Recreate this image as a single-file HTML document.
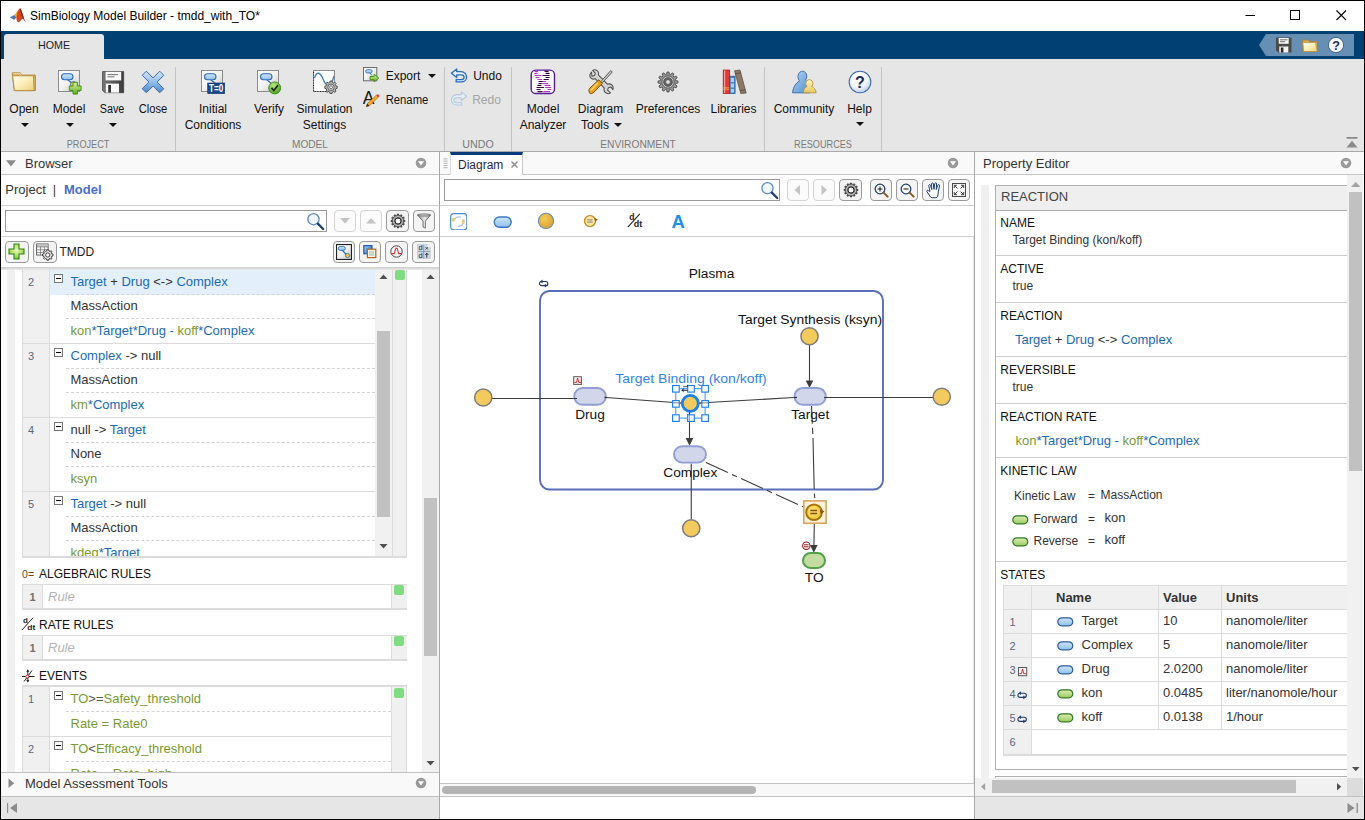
<!DOCTYPE html>
<html>
<head>
<meta charset="utf-8">
<title>SimBiology Model Builder - tmdd_with_TO*</title>
<style>
*{box-sizing:border-box;margin:0;padding:0}
html,body{width:1365px;height:820px;overflow:hidden;background:#fff}
body{font-family:"Liberation Sans",sans-serif;font-size:13px;color:#333;position:relative}
.abs,.abs>*{position:absolute}
#win{position:absolute;left:0;top:0;width:1365px;height:820px;border:1px solid #000;overflow:hidden;background:#fff}
#win>div,#win>svg{position:absolute}
/* everything inside #win is positioned relative to window outer origin (0,0) by shifting -1 */
#root{left:-1px;top:-1px;width:1365px;height:820px}
#root div,#root span.a,#root svg{position:absolute}
.t{white-space:nowrap;line-height:1}
/* title */
#title{left:30px;top:10px;font-size:12px;color:#000;letter-spacing:0}
/* blue bar */
#bluebar{left:1px;top:31px;width:1363px;height:28px;background:#004073}
#hometab{left:4px;top:34px;width:100px;height:25px;background:#e6e6e6;border-radius:3px 3px 0 0}
#hometab .t{left:0;width:100px;top:5.500px;text-align:center;font-size:11px;color:#222;transform:scaleX(.97)}
/* toolstrip */
#strip{left:1px;top:59px;width:1363px;height:92px;background:#e6e6e6}
#stripline{left:1px;top:151px;width:1363px;height:1px;background:#a9a9a9}
.sep{width:1px;top:67px;height:84px;background:#c4c4c4}
.lbl{font-size:12px;color:#111;text-align:center;white-space:nowrap;line-height:1;transform:translateX(-50%) scaleX(var(--k,1))}
.grp{font-size:11px;color:#7a7a7a;text-align:center;white-space:nowrap;line-height:1;transform:translateX(-50%) scaleX(var(--k,1));top:138.500px}
.dd{width:0;height:0;border-left:4px solid transparent;border-right:4px solid transparent;border-top:4px solid #111}
/* panels */
.phead{background:#f9f9f9;border-bottom:1px solid #c8c8c8;height:23px;top:152px}
.phead .t{font-size:13px;color:#333;top:5px}
.vdiv{width:1px;background:#a9a9a9;top:152px;height:667px;z-index:5}
.btn{border:1px solid #9a9a9a;border-radius:4px;background:#f4f4f4}
.btn.dis{border-color:#d4d4d4;background:#fbfbfb}
.inp{border:1px solid #9a9a9a;background:#fff}
.blue{color:#1a6bb5 !important}.green{color:#7a9a2f !important}

.rt{left:47.500px;font-size:13px;color:#333}
.rnum{left:5px;font-size:11px;color:#5c6680;margin-top:-.7px}
.ebox{left:31px;width:9px;height:9px;border:1px solid #777;background:#fff}
.ebox:after{content:"";position:absolute;left:1px;top:3px;width:5px;height:1px;background:#000}
.dl{left:43px;width:309px;height:0;border-top:1px dashed #d4d4d4}
.hl{left:0;width:352px;height:1px;background:#dcdcdc}
.ruletab{left:21px;width:385px;height:26px;margin-top:-.3px;border:1px solid #dcdcdc;border-top-width:1.500px;border-bottom-width:2px;background:#fff}
.ruletab .rn{left:0;top:0;width:20px;height:23px;background:#f0f0f0;border-right:1px solid #dcdcdc;font-size:11px;font-weight:bold;color:#707070;text-align:center;line-height:24.500px}
.ruletab .rp{left:25px;top:4.800px;font-size:13px;font-style:italic;color:#b4b4b4}
.ruletab .st{left:367.500px;top:0;width:16px;height:23px;background:#f0f0f0;border-left:1px solid #dcdcdc}
.ruletab .sq{left:370.500px;top:0;width:10px;height:10px;background:#80dc80;border-radius:2px}
#etab .hl{width:368px}
#etab .dl{width:325px}

.ph{left:4.300px;font-size:12px;color:#111;white-space:nowrap;line-height:1}
.pv{left:16.500px;font-size:12px;color:#333;white-space:nowrap;line-height:1}
.pl{left:0;width:360px;height:1px;background:#cfcfcf}
.sv{top:0;width:1px;background:#dcdcdc}
.sh{left:0;width:360px;height:1px;background:#dcdcdc}
.sb{font-size:13px;font-weight:bold;color:#333;margin-top:-1px}
.sn{left:5.500px;font-size:11px;color:#5c6680;margin-top:-1px}
.sc{font-size:13px;color:#333;margin-top:-1px}
</style>
</head>
<body>
<div id="win"><div id="root">

<!-- TITLE BAR -->
<div id="title" class="t">SimBiology Model Builder - tmdd_with_TO*</div>
<div id="bluebar"></div>
<div id="hometab"><div class="t">HOME</div></div>
<div id="strip"></div>
<div id="stripline"></div>

<!-- window controls -->
<svg style="left:1240px;top:5px" width="120" height="22" viewBox="0 0 120 22">
 <path d="M5.5 10.5H15" stroke="#000" stroke-width="1" fill="none"/>
 <rect x="50.5" y="5.5" width="9" height="9" stroke="#000" stroke-width="1" fill="none"/>
 <path d="M96.5 5.5l9.5 9.5M106 5.5l-9.5 9.5" stroke="#000" stroke-width="1.1" fill="none"/>
</svg>
<!-- matlab logo -->
<svg style="left:8.500px;top:6.500px" width="18" height="17.500" viewBox="0 0 20 18" preserveAspectRatio="none">
 <path d="M1 10.5l5-2.2 2.2 2.4-2.6 2.6z" fill="#4a78b8"/>
 <path d="M6 8.3c2-1 3.4-4.6 5.6-6.6 .7-.5 1.3-.2 1.7.6L16.8 12c-1.2-.6-2.6.4-3.6 1.6-1 1.2-1.8 2.2-2.6 2.2-.9 0-2.6-2-2.4-5.100z" fill="#d8461c"/>
 <path d="M11.6 1.700c.7-.5 1.300-.2 1.700.6L16.800 12l1.800 3.800c-1.500-1.600-3-3.200-4-5.400-.9-2.200-1.600-6.400-3-8.700z" fill="#8c1d10"/>
 <path d="M6 8.300c1.400-.7 2.600-2.800 3.800-4.600-.6 2.400-1.200 5-1.600 7z" fill="#f3a83a"/>
</svg>
<!-- quick access -->
<svg style="left:1258px;top:34px" width="98" height="22" viewBox="0 0 98 22">
 <path d="M1 11L8 0H96V22H8z" fill="#668fb3"/>
 <!-- save -->
 <g transform="translate(18,3.500)">
  <path d="M0 0H15.500V15H2.500L0 13z" fill="#4a4a4a"/>
  <rect x="2.700" y=".5" width="10" height="5.800" fill="#f4f4f4"/>
  <path d="M4 2.300h7.500M4 4.200h5" stroke="#666" stroke-width=".9"/>
  <rect x="3.300" y="9" width="9" height="6" fill="#f4f4f4"/>
  <rect x="4.800" y="10" width="2.600" height="5" fill="#2a2a2a"/>
 </g>
 <!-- folder -->
 <g transform="translate(44,5.500)">
  <path d="M.5.500h5.700l1.500 1.600H15.500V12H1z" fill="#d8b05c" stroke="#a87c2c" stroke-width=".8" stroke-linejoin="round"/>
  <path d="M.8 3h12.800l1.600 9H1.800z" fill="url(#gFold)" stroke="#b48a3c" stroke-width=".7" stroke-linejoin="round"/>
 </g>
 <!-- help -->
 <circle cx="78" cy="11" r="7.600" fill="#f4f6fa" stroke="#30507e" stroke-width=".8"/>
 <text x="78" y="15.500" font-family="Liberation Sans, sans-serif" font-size="12.500" font-weight="bold" text-anchor="middle" fill="#1c2c5c">?</text>
</svg>
<!-- collapse toolstrip -->
<svg style="left:1346px;top:137px" width="12" height="12" viewBox="0 0 12 12"><path d="M.5 0h11v1.800H.5z M6 3.800L11.500 10.500H.5z" fill="#8a8a8a"/></svg>

<!-- separators -->
<div class="sep" style="left:175px"></div>
<div class="sep" style="left:444px"></div>
<div class="sep" style="left:511px"></div>
<div class="sep" style="left:764px"></div>
<div class="sep" style="left:881px"></div>

<!-- group labels -->
<div class="grp" style="left:87.500px;--k:.83">PROJECT</div>
<div class="grp" style="left:310px;--k:.92">MODEL</div>
<div class="grp" style="left:478.250px;--k:.97">UNDO</div>
<div class="grp" style="left:638px;--k:.93">ENVIRONMENT</div>
<div class="grp" style="left:823px;--k:.83">RESOURCES</div>

<!-- big button labels -->
<div class="lbl" style="left:24px;top:103px">Open</div><div class="dd" style="left:21px;top:123px"></div>
<div class="lbl" style="left:69px;top:103px">Model</div><div class="dd" style="left:66px;top:123px"></div>
<div class="lbl" style="left:112.200px;top:103px;--k:.9">Save</div><div class="dd" style="left:109px;top:123px"></div>
<div class="lbl" style="left:152.500px;top:103px;--k:.93">Close</div>
<div class="lbl" style="left:213px;top:103px">Initial</div>
<div class="lbl" style="left:213px;top:119px">Conditions</div>
<div class="lbl" style="left:269px;top:103px">Verify</div>
<div class="lbl" style="left:324.500px;top:103px">Simulation</div>
<div class="lbl" style="left:324.500px;top:119px">Settings</div>
<div class="lbl" style="left:403px;top:70px">Export</div><div class="dd" style="left:428px;top:74px"></div>
<div class="lbl" style="left:406.500px;top:94px;--k:.94">Rename</div>
<div class="lbl" style="left:487.500px;top:70px">Undo</div>
<div class="lbl" style="left:486.500px;top:94px;color:#a4a4a4">Redo</div>
<div class="lbl" style="left:543px;top:103px">Model</div>
<div class="lbl" style="left:543px;top:119px">Analyzer</div>
<div class="lbl" style="left:600.500px;top:103px">Diagram</div>
<div class="lbl" style="left:595px;top:119px">Tools</div><div class="dd" style="left:614px;top:123px"></div>
<div class="lbl" style="left:668px;top:103px">Preferences</div>
<div class="lbl" style="left:733.500px;top:103px">Libraries</div>
<div class="lbl" style="left:804px;top:103px">Community</div>
<div class="lbl" style="left:859.500px;top:103px">Help</div><div class="dd" style="left:856px;top:122px"></div>

<svg width="0" height="0" style="left:0;top:0">
 <defs>
  <linearGradient id="gFold" x1="0" y1="0" x2="1" y2="1"><stop offset="0" stop-color="#fffdf0"/><stop offset=".5" stop-color="#fbeeb8"/><stop offset="1" stop-color="#eccf7a"/></linearGradient>
  <linearGradient id="gSq" x1="0" y1="0" x2="1" y2="1"><stop offset="0" stop-color="#ffffff"/><stop offset=".5" stop-color="#f2f2f2"/><stop offset="1" stop-color="#c4c4c4"/></linearGradient>
  <linearGradient id="gPill" x1="0" y1="0" x2="0" y2="1"><stop offset="0" stop-color="#cfe6fb"/><stop offset="1" stop-color="#8fc0ee"/></linearGradient>
  <linearGradient id="gGrn" x1="0" y1="0" x2="0" y2="1"><stop offset="0" stop-color="#d6f29a"/><stop offset="1" stop-color="#62b022"/></linearGradient>
  <linearGradient id="gX" x1="0" y1="0" x2="0" y2="1"><stop offset="0" stop-color="#d4e6f8"/><stop offset=".5" stop-color="#92bfe9"/><stop offset="1" stop-color="#4f86c6"/></linearGradient>
  <linearGradient id="gSave" x1="0" y1="0" x2="1" y2="0"><stop offset="0" stop-color="#777"/><stop offset=".5" stop-color="#5a5a5a"/><stop offset="1" stop-color="#3a3a3a"/></linearGradient>
  <radialGradient id="gHelp" cx=".4" cy=".3" r=".8"><stop offset="0" stop-color="#ffffff"/><stop offset=".6" stop-color="#eef2f8"/><stop offset="1" stop-color="#a9c0de"/></radialGradient>
  <linearGradient id="gBlueP" x1="0" y1="0" x2="1" y2="1"><stop offset="0" stop-color="#b8d8f4"/><stop offset="1" stop-color="#4f8ccc"/></linearGradient>
  <linearGradient id="gYelP" x1="0" y1="0" x2="0" y2="1"><stop offset="0" stop-color="#fff4c0"/><stop offset="1" stop-color="#e8c860"/></linearGradient>
  <radialGradient id="gChk" cx=".4" cy=".3" r=".8"><stop offset="0" stop-color="#b8e878"/><stop offset="1" stop-color="#3f9a18"/></radialGradient>
  <linearGradient id="gGear" x1="0" y1="0" x2="0" y2="1"><stop offset="0" stop-color="#9a9a9a"/><stop offset="1" stop-color="#5e5e5e"/></linearGradient>
  <g id="sqModel">
   <rect x=".5" y=".5" width="21" height="21" fill="url(#gSq)" stroke="#8c8c8c"/>
   <path d="M9.500 9.500L15.500 14.500" stroke="#3b6fb4" stroke-width="1.200"/>
   <rect x="3.500" y="3.800" width="11.500" height="6" rx="3" fill="url(#gPill)" stroke="#2f6cb8" stroke-width="1.100"/>
  </g>
  
  <g id="magn"><circle cx="7.500" cy="7.200" r="5.600" fill="#eef5fc" stroke="#5b89c4" stroke-width="1.300"/><path d="M4.500 5.500a3.600 3.600 0 0 1 3-2" stroke="#fff" stroke-width="1.200" fill="none"/><path d="M11.800 11.600l5.400 5.400" stroke="#1d3f72" stroke-width="2.300" stroke-linecap="round"/></g>
  
  
  <linearGradient id="gGP" x1="0" y1="0" x2="0" y2="1"><stop offset="0" stop-color="#dcefb4"/><stop offset="1" stop-color="#9cc860"/></linearGradient>
  <g id="gpill"><rect x=".8" y=".8" width="15" height="8" rx="4" fill="url(#gGP)" stroke="#2f7a24" stroke-width="1.200"/></g>
  <g id="bpill"><rect x=".8" y=".8" width="15" height="8" rx="4" fill="url(#gPill)" stroke="#2c5f9e" stroke-width="1.200"/></g>
  <g id="repic"><rect x="1" y="1.700" width="8.300" height="4.200" rx="2" fill="none" stroke="#1f3a6e" stroke-width="1.150"/><path d="M1.600 1.700L4 -.2v3.800z M8.700 5.900L6.300 4v3.800z" fill="#1f3a6e"/></g>
  <g id="gear12"><path d="M-1.07 -10.14L1.07 -10.14L1.33 -7.89L2.79 -7.50L4.15 -9.32L6.00 -8.25L5.10 -6.16L6.16 -5.10L8.25 -6.00L9.32 -4.15L7.50 -2.79L7.89 -1.33L10.14 -1.07L10.14 1.07L7.89 1.33L7.50 2.79L9.32 4.15L8.25 6.00L6.16 5.10L5.10 6.16L6.00 8.25L4.15 9.32L2.79 7.50L1.33 7.89L1.07 10.14L-1.07 10.14L-1.33 7.89L-2.79 7.50L-4.15 9.32L-6.00 8.25L-5.10 6.16L-6.16 5.10L-8.25 6.00L-9.32 4.15L-7.50 2.79L-7.89 1.33L-10.14 1.07L-10.14 -1.07L-7.89 -1.33L-7.50 -2.79L-9.32 -4.15L-8.25 -6.00L-6.16 -5.10L-5.10 -6.16L-6.00 -8.25L-4.15 -9.32L-2.79 -7.50L-1.33 -7.89z" stroke-linejoin="round"/></g>
  <g id="gear10">
   <path d="M0-10.200L1.700-10 2.200-7.800 4.500-6.900 6.300-8.200 8.200-6.300 6.900-4.500 7.800-2.200 10-1.700 10 1.700 7.800 2.200 6.900 4.500 8.200 6.300 6.300 8.200 4.500 6.900 2.200 7.800 1.700 10-1.700 10-2.200 7.800-4.500 6.900-6.300 8.200-8.200 6.300-6.900 4.500-7.800 2.200-10 1.700-10-1.700-7.800-2.200-6.900-4.500-8.200-6.300-6.300-8.200-4.500-6.900-2.200-7.800-1.700-10z"/>
  </g>
 </defs>
</svg>
<!-- Open folder -->
<svg style="left:11px;top:71px" width="27" height="21" viewBox="0 0 27 21">
 <path d="M1.300 1.800h8l1.500 2.300h13.500V19.600H3.200z" fill="#dcb768" stroke="#a87c30" stroke-width=".9" stroke-linejoin="round"/>
 <path d="M1.600 4.800h20.800l.8 14.800H3.400z" fill="url(#gFold)" stroke="#b48a3c" stroke-width=".9" stroke-linejoin="round"/>
 <path d="M1.800 2.300h7.200l1.400 2.200" fill="none" stroke="#f8e8b8" stroke-width=".8"/>
</svg>
<!-- Model (new) -->
<svg style="left:57.500px;top:69.500px" width="26" height="26" viewBox="0 0 26 26">
 <use href="#sqModel"/>
 <circle cx="15.500" cy="14.500" r="3" fill="#f2c84c" stroke="#2f6cb8" stroke-width=".9"/>
 <path d="M15 12.300h4.400v3.700h3.700v4.400h-3.700v3.700H15v-3.700h-3.700V16H15z" fill="url(#gGrn)" stroke="#3c8a12" stroke-width=".9"/>
</svg>
<!-- Save -->
<svg style="left:102px;top:71px" width="23" height="23" viewBox="0 0 23 23">
 <path d="M.5.500H21.700V21.700H3L.5 19.500z" fill="url(#gSave)" stroke="#333" stroke-width=".6"/>
 <rect x="3.600" y=".8" width="15.600" height="8.600" fill="#fafafa"/>
 <path d="M5.500 3.600H16M5.500 5.800h7" stroke="#6e6e6e" stroke-width="1"/>
 <rect x="3.800" y="12.600" width="13.200" height="9" fill="#fdfdfd"/>
 <rect x="6.200" y="14" width="2.800" height="7.600" fill="#333"/>
</svg>
<!-- Close X -->
<svg style="left:141px;top:70px" width="24" height="24" viewBox="0 0 24 24">
 <path d="M5.300 1.200L12 7.900 18.700 1.200 22.800 5.300 16.100 12 22.800 18.700 18.700 22.800 12 16.100 5.300 22.800 1.200 18.700 7.900 12 1.200 5.300z" fill="url(#gX)" stroke="#3a6cae" stroke-width="1" stroke-linejoin="round"/>
</svg>
<!-- Initial conditions -->
<svg style="left:200.500px;top:69.500px" width="26" height="26" viewBox="0 0 26 26">
 <use href="#sqModel"/>
 <rect x="6.700" y="13" width="17" height="10.600" fill="#15478c" stroke="#0d3468" stroke-width=".6"/>
 <text x="15.200" y="22" font-family="Liberation Sans,sans-serif" font-weight="bold" font-size="10.500" text-anchor="middle" fill="#fff" textLength="14.200" lengthAdjust="spacingAndGlyphs">T=0</text>
</svg>
<!-- Verify -->
<svg style="left:256.500px;top:69.500px" width="26" height="26" viewBox="0 0 26 26">
 <use href="#sqModel"/>
 <circle cx="17.700" cy="17.900" r="6" fill="url(#gChk)" stroke="#2f8412" stroke-width=".8"/>
 <path d="M14.500 17.900l2.300 2.600 4.200-5.200" fill="none" stroke="#222" stroke-width="1.700"/>
</svg>
<!-- Simulation settings -->
<svg style="left:312.500px;top:69.500px" width="27" height="26" viewBox="0 0 27 26">
 <rect x=".5" y=".5" width="21" height="21" fill="#fff" stroke="#8c8c8c"/>
 <path d="M.5 2v19.500H20" fill="none" stroke="#222" stroke-width="1.200" stroke-dasharray="1 1.600"/>
 <path d="M1.500 8C3.500 1.500 7 1.500 10 9S17 20 21 6" fill="none" stroke="#3f7cc4" stroke-width="1.300"/>
 <g transform="translate(18,17.300) scale(.62)"><use href="#gear10" fill="#b4b4b4" stroke="#3c3c3c" stroke-width="1.300"/><circle r="5.200" fill="#e0e0e0" stroke="#3c3c3c" stroke-width="1.200"/><circle r="2.400" fill="#fafafa" stroke="#444" stroke-width="1.200"/></g>
</svg>
<!-- Export -->
<svg style="left:362.500px;top:66.500px" width="18" height="18" viewBox="0 0 18 18">
 <rect x=".5" y=".5" width="13.300" height="13.300" fill="url(#gSq)" stroke="#6c6c6c"/>
 <path d="M6 5L9 8.500" stroke="#3b6fb4" stroke-width="1"/>
 <rect x="2.700" y="2.700" width="6.400" height="3.300" rx="1.650" fill="url(#gPill)" stroke="#2f6cb8" stroke-width=".9"/>
 <path d="M7 9.400h4.200V7.300L15.800 11 11.200 14.800V12.700H7z" fill="url(#gGrn)" stroke="#3c8a12" stroke-width=".9" stroke-linejoin="round"/>
</svg>
<!-- Rename -->
<svg style="left:362.500px;top:90.500px" width="18" height="18" viewBox="0 0 18 18">
 <text x="-.3" y="13.300" font-family="Liberation Sans,sans-serif" font-size="17.500" fill="#1a1a1a">A</text>
 <path d="M3.200 15.800L4.300 12.600 13.300 4.200 15.300 6.300 6.400 14.800z" fill="#f0a830" stroke="#9a6412" stroke-width=".6"/>
 <path d="M13.300 4.200l1.300-1.200 2 2.100-1.300 1.200z" fill="#d84040"/>
 <path d="M3.200 15.800l1.100-3.200 2.100 2.200z" fill="#3a2a1a"/>
</svg>
<!-- Undo -->
<svg style="left:449.800px;top:67.500px" width="18" height="15.200" viewBox="0 0 18 16">
 <path d="M6.600 1L1 5.500 6.600 10V7.200h4.600c2 0 3.200 1 3.200 2.500s-1.300 2.600-3.200 2.600H6v2.400h5.400c3.300 0 5.600-2.100 5.600-5S14.700 3.800 11.400 3.800H6.600z" fill="#e4effa" stroke="#2f6cb8" stroke-width="1.400" stroke-linejoin="round"/>
</svg>
<!-- Redo -->
<svg style="left:449.600px;top:91.300px" width="18" height="15.200" viewBox="0 0 18 16">
 <path d="M11.400 1L17 5.500 11.400 10V7.200H6.800c-2 0-3.200 1-3.200 2.500s1.300 2.600 3.200 2.600H12v2.400H6.600C3.300 14.700 1 12.600 1 9.700S3.300 3.800 6.600 3.800h4.800z" fill="#e6eef6" stroke="#b4c8de" stroke-width="1.100" stroke-linejoin="round"/>
</svg>
<!-- Model analyzer -->
<svg style="left:529.700px;top:69px" width="26" height="26" viewBox="0 0 26 26">
 <rect x="1.200" y="1.100" width="23.300" height="23.400" rx="4.600" fill="#fcfcfc" stroke="#5a1a92" stroke-width="1.400"/>
 <g stroke-width="1.200" fill="none" stroke-linecap="round">
  <path d="M4.9 2.3H7.6M4.9 4.4H7.0M5.1 6.5H11.1M6.0 8.5H8.9M7.8 10.5H11.7M13.1 12.5H15.8M12.1 14.5H17.7M15.0 16.4H19.9M15.6 18.5H20.9M18.1 20.5H20.9M13.8 22.6H19.7" stroke="#b23cc6"/>
  <path d="M15.0 2.3H18.1M16.0 4.4H19.1M12.9 6.5H19.1M16.0 8.5H19.1M14.0 10.5H18.3M9.0 12.5H12.3M9.0 14.5H11.3M8.0 16.4H10.9M7.0 18.5H13.6M7.0 20.5H10.1M8.0 22.6H12.1" stroke="#3a0a3c"/>
 </g>
</svg>
<!-- Diagram tools -->
<svg style="left:588px;top:69px" width="26" height="26" viewBox="0 0 26 26">
 <path d="M3.200 2.200C1.200 3.800.8 6.300 2.200 8 3.500 9.500 5.500 9.800 7 9l9.500 9.800c-.6 1.500-.3 3.400 1 4.600 1.500 1.400 3.800 1.500 5.400.4l-3-2.800.8-2.600 2.700-.6 2 2.600c.6-1.800.2-3.700-1.200-4.900-1.300-1.100-3-1.300-4.500-.7L10.200 5.200c.6-1.600.2-3.400-1.200-4.500C7.700-.3 5.800-.4 4.300.5L7 3.200 6.300 5.800 3.600 6.400z" fill="#d4d4d4" stroke="#4e4e4e" stroke-width="1.100" stroke-linejoin="round" transform="translate(.5,1) scale(.96)"/>
 <path d="M12 13.500L22.800 1.500 24.300 3 13.500 14.800z" fill="#c8c8c8" stroke="#4e4e4e" stroke-width=".9"/>
 <path d="M1 22.500C.5 21 1.500 19.500 3 18l7.800-7.200 3.400 3.600L7.200 22C5.500 23.800 3.700 25 2.200 24.600 1.500 24.300 1.200 23.500 1 22.500z" fill="#e8a21a" stroke="#7c5208" stroke-width="1"/>
 <path d="M2.800 21.200l7.200-7.400" stroke="#ffdc80" stroke-width="1.300" fill="none"/>
</svg>
<!-- Preferences gear -->
<svg style="left:657px;top:71px" width="22" height="22" viewBox="-11 -11 22 22">
 <g transform="scale(.98)"><use href="#gear12" fill="#9c9c9c" stroke="#484848" stroke-width=".9"/></g>
 <circle r="6.200" fill="#c4c4c4" stroke="#4a4a4a" stroke-width=".9"/>
 <circle r="4.300" fill="#6c6c6c" stroke="#3c3c3c" stroke-width=".8"/>
 <circle r="2.300" fill="#e4e4e4" stroke="#4a4a4a" stroke-width=".7"/>
</svg>
<!-- Libraries -->
<svg style="left:722px;top:69px" width="26" height="26" viewBox="0 0 26 26">
 <rect x="1.200" y="1" width="6.500" height="23.600" fill="#e23a34" stroke="#a81814" stroke-width=".7"/>
 <path d="M2.600 1.500v22.500" stroke="#f59a94" stroke-width="1.200"/>
 <path d="M1.200 18.800h6.500M1.200 20.300h6.500" stroke="#f2c24c" stroke-width=".7"/>
 <rect x="7.700" y="7.200" width="5.400" height="17.400" fill="#4f86c8" stroke="#23508e" stroke-width=".7"/>
 <rect x="8.800" y="9" width="3.200" height="4" fill="#a8d0f4"/><rect x="8.800" y="14.500" width="3.200" height="4" fill="#a8d0f4"/><rect x="8.800" y="20" width="3.200" height="3.500" fill="#a8d0f4"/>
 <path d="M12.500 1.800L18 1 24.200 24 18.800 24.600z" fill="#8c7864" stroke="#54463a" stroke-width=".7"/>
 <path d="M13.300 4.800l5.400-.9M18 21.600l5.400-.8" stroke="#54463a" stroke-width=".8"/>
</svg>
<!-- Community -->
<svg style="left:791px;top:69px" width="27" height="26" viewBox="0 0 27 26">
 <path d="M1.500 23.800C2 18 5 14 8.500 11.800 6.500 10 6.500 6.500 8 4.200 9.800 1.500 13.500 1.600 15 4.200c1.300 2.300.9 5-.4 6.800 2.500 2 3.600 5 4 12.800z" fill="url(#gBlueP)" stroke="#3468a8" stroke-width=".9"/>
 <path d="M12.300 23.800c.2-3.400 1.400-5.200 3.800-6.400-1.600-1.500-1.700-4-.4-5.500 1.400-1.600 4-1.600 5.300 0 1.300 1.600 1.100 4-.4 5.500 2.600 1.200 4.200 3 4.500 6.400z" fill="url(#gYelP)" stroke="#b8943c" stroke-width=".9"/>
</svg>
<!-- Help -->
<svg style="left:848px;top:70px" width="24" height="24" viewBox="0 0 24 24">
 <circle cx="12" cy="12" r="10.800" fill="url(#gHelp)" stroke="#3d6cb0" stroke-width="1.100"/>
 <text x="12" y="17.800" font-family="Liberation Sans,sans-serif" font-weight="bold" font-size="16" text-anchor="middle" fill="#1a2c5e">?</text>
</svg>

<!-- ============ BROWSER PANEL ============ -->
<div class="phead" style="left:1px;width:438px"></div>
<svg style="left:6.300px;top:159.500px" width="11" height="8" viewBox="0 0 11 8"><path d="M0 .3h10L5 6.600z" fill="#8c8c8c"/></svg>
<div class="t" style="left:25px;top:157px;font-size:13px;color:#333">Browser</div>
<svg style="left:415px;top:157px" width="12" height="12" viewBox="0 0 12 12"><circle cx="6" cy="6" r="5.300" fill="#9a9a9a"/><path d="M3 4.200h6L6 8.600z" fill="#fff"/></svg>
<div class="vdiv" style="left:439px"></div>

<!-- project | model -->
<div class="t" style="left:5.300px;top:183.300px;font-size:13px;color:#333">Project</div>
<div class="t" style="left:52.800px;top:182.800px;font-size:13px;color:#444">|</div>
<div class="t" style="left:64px;top:183.300px;font-size:13px;font-weight:bold;color:#4a6fc8">Model</div>
<div style="left:1px;top:205px;width:438px;height:1px;background:#d0d0d0"></div>

<!-- search row -->
<div class="inp" style="left:5px;top:210px;width:322px;height:22px"></div>
<svg id="mag1" style="left:306px;top:212px" width="20" height="19" viewBox="0 0 20 19"><use href="#magn"/></svg>
<div class="btn dis" style="left:334px;top:210px;width:22px;height:22px"></div>
<svg style="left:340px;top:218px" width="10" height="6"><path d="M0 0h10L5 5.500z" fill="#c4c4c4"/></svg>
<div class="btn dis" style="left:360px;top:210px;width:22px;height:22px"></div>
<svg style="left:366px;top:218px" width="10" height="6"><path d="M0 5.500h10L5 0z" fill="#c4c4c4"/></svg>
<div class="btn" style="left:386px;top:210px;width:23px;height:22px"></div>
<svg style="left:389.500px;top:213px" width="16" height="16" viewBox="-8 -8 16 16"><g transform="scale(.68)"><use href="#gear12" fill="#5c5c5c" stroke="#262626" stroke-width="1"/></g><circle r="4.500" fill="none" stroke="#b4b4b4" stroke-width="1.500"/><circle r="3" fill="#fdfdfd" stroke="#262626" stroke-width="1"/></svg>
<div class="btn" style="left:413px;top:210px;width:22px;height:22px"></div>
<svg style="left:416px;top:213px" width="16" height="17" viewBox="0 0 16 17"><defs><linearGradient id="gFun" x1="0" y1="0" x2="1" y2="0"><stop offset="0" stop-color="#8c8c8c"/><stop offset=".55" stop-color="#e8e8e8"/><stop offset="1" stop-color="#9a9a9a"/></linearGradient></defs><path d="M1.500 2h13L9.400 8.200v7L7 14V8.200z" fill="url(#gFun)" stroke="#5a5a5a" stroke-width=".8" stroke-linejoin="round"/><ellipse cx="8" cy="2" rx="6.500" ry="1.100" fill="#c8c8c8" stroke="#5a5a5a" stroke-width=".7"/></svg>
<div style="left:1px;top:236px;width:438px;height:1px;background:#d0d0d0"></div>

<!-- model row -->
<div class="btn" style="left:5px;top:240.500px;width:23.500px;height:22px"></div>
<svg style="left:8px;top:243px" width="17" height="17" viewBox="0 0 17 17"><defs><radialGradient id="gPlus" cx=".5" cy=".4" r=".7"><stop offset="0" stop-color="#e8f8c0"/><stop offset=".6" stop-color="#a8dc58"/><stop offset="1" stop-color="#5cac20"/></radialGradient></defs><path d="M6 1h5v5h5v5h-5v5H6v-5H1V6h5z" fill="url(#gPlus)" stroke="#2f8412" stroke-width="1.100"/></svg>
<div class="btn" style="left:33px;top:240.500px;width:23.500px;height:22px"></div>
<svg style="left:36px;top:243px" width="18" height="18" viewBox="0 0 18 18">
 <rect x=".6" y="1" width="11.500" height="11" fill="#fff" stroke="#555" stroke-width=".9"/>
 <rect x="1" y="1.400" width="10.700" height="2.300" fill="#c4c4c4"/>
 <path d="M.6 3.900h11.500M.6 6.700h11.500M.6 9.400h11.500M4.500 3.900v8M8.300 3.900v8" stroke="#666" stroke-width=".7"/>
 <g transform="translate(11.800,12) scale(.52)"><use href="#gear10" fill="#dcdcdc" stroke="#333" stroke-width="1.800"/><circle r="4" fill="#fff" stroke="#333" stroke-width="1.600"/></g>
</svg>
<div class="t" style="left:59.500px;top:245.500px;font-size:12px;color:#222">TMDD</div>
<div class="btn" style="left:333px;top:240.500px;width:22px;height:22px"></div>
<svg style="left:336px;top:243.500px" width="16" height="16" viewBox="0 0 16 16"><rect x=".5" y=".5" width="15" height="15" fill="url(#gSq)" stroke="#222" stroke-width="1.200"/><path d="M5.500 5.500l5.800 6" stroke="#2f6cb8" stroke-width="1.100"/><rect x="2.300" y="2.500" width="7" height="3.800" rx="1.900" fill="url(#gPill)" stroke="#2f6cb8" stroke-width=".9"/><circle cx="11.500" cy="11.500" r="2.100" fill="#f2c84c" stroke="#2f6cb8" stroke-width=".8"/></svg>
<div class="btn" style="left:359px;top:240.500px;width:22px;height:22px"></div>
<svg style="left:363px;top:245px" width="14" height="14" viewBox="0 0 14 14"><defs><linearGradient id="gB2" x1="0" y1="0" x2="1" y2="1"><stop offset="0" stop-color="#9cc8f4"/><stop offset="1" stop-color="#2a6ac4"/></linearGradient></defs><rect x=".8" y=".6" width="8.200" height="8.200" fill="url(#gB2)" stroke="#1c55a8" stroke-width="1.100"/><rect x="4.400" y="4.200" width="8.400" height="8.400" fill="#fdf4dc" stroke="#a8662a" stroke-width="1.200"/><rect x="6.500" y="6.300" width="4.200" height="4.200" fill="#c8d8c8" stroke="#b8c8d8" stroke-width=".6"/></svg>
<div class="btn" style="left:384.800px;top:240.500px;width:23px;height:22px"></div>
<svg style="left:389.800px;top:245px" width="13" height="13" viewBox="0 0 13 13"><circle cx="6.500" cy="6.500" r="5.700" fill="#fafafa" stroke="#444" stroke-width="1"/><path d="M1.300 8.600h3L5.800 3.200h1.400L8.700 8.600h3" fill="none" stroke="#e03030" stroke-width="1.100"/></svg>
<div class="btn" style="left:412px;top:240.500px;width:23px;height:22px"></div>
<svg style="left:416.500px;top:244px" width="15" height="15" viewBox="0 0 15 15"><path d="M.5.500h10l2.800 2.800v11.200H.5z" fill="#d0d9e6" stroke="#b0b8c4" stroke-width=".5"/><path d="M10.500.500v2.800h2.800z" fill="#fff"/><path d="M6.700 1v13.500M1 7.500h12" stroke="#7a828c" stroke-width=".7"/><text x="1.500" y="6.300" font-family="Liberation Sans,sans-serif" font-size="7.500" fill="#222">d</text><text x="1.500" y="13.600" font-family="Liberation Sans,sans-serif" font-size="7.500" fill="#222">d</text><path d="M8.500 3l2.600 2.600M11.100 3l-2.600 2.600" stroke="#333" stroke-width=".8"/><path d="M9.800 9.200v4.600M8.200 11l1.600-1.800 1.600 1.800" stroke="#222" stroke-width=".9" fill="none"/></svg>

<!-- shadow under model row -->
<div style="left:1px;top:267px;width:438px;height:3px;background:linear-gradient(#cfcfcf,#e9e9e9)"></div>

<!-- scroll area -->
<div id="bscroll" style="left:1px;top:270px;width:438px;height:502px;overflow:hidden;background:#fff">
 <div style="left:6px;top:0;width:8px;height:502px;background:#f0f0f0"></div>
 <!-- outer scrollbar -->
 <div style="left:421px;top:0;width:17px;height:502px;background:#f1f1f1"></div>
 <svg style="left:425px;top:4px" width="10" height="6"><path d="M.5 5h8L4.500 .5z" fill="#505050"/></svg>
 <svg style="left:425px;top:490px" width="10" height="6"><path d="M.5 1h8L4.500 5.500z" fill="#505050"/></svg>
 <div style="left:423px;top:228px;width:13px;height:158px;background:#c1c1c1"></div>

 <!-- reactions table -->
 <div id="rtab" style="left:21px;top:0;width:385px;height:288px;overflow:hidden;border-left:1px solid #dcdcdc;border-right:1px solid #dcdcdc;border-bottom:2px solid #dcdcdc;background:#fff">
  <div style="left:0;top:0;width:27px;height:288px;background:#f0f0f0;border-right:1px solid #dcdcdc"></div>
  <div style="left:27px;top:0;width:325px;height:24.500px;background:#e3f0fb"></div>
  <!-- inner scrollbar -->
  <div style="left:351.500px;top:0;width:17px;height:287px;background:#f1f1f1"></div>
  <svg style="left:355.500px;top:4px" width="10" height="6"><path d="M.5 5h8L4.500 .5z" fill="#505050"/></svg>
  <svg style="left:355.500px;top:273px" width="10" height="6"><path d="M.5 1h8L4.500 5.500z" fill="#505050"/></svg>
  <div style="left:353.500px;top:61px;width:13px;height:186px;background:#c1c1c1"></div>
  <!-- status col -->
  <div style="left:368.500px;top:0;width:15.500px;height:287px;background:#f0f0f0;border-left:1px solid #dcdcdc"></div>
  <div style="left:371.500px;top:0;width:10px;height:10px;background:#80dc80;border-radius:2px"></div>
  <div class="t rnum" style="top:8px">2</div>
  <div class="ebox" style="top:4px"></div>
  <div class="t rt" style="top:5px"><span class="blue">Target</span> + <span class="blue">Drug</span> &lt;-&gt; <span class="blue">Complex</span></div>
  <div class="dl" style="top:24px"></div>
  <div class="t rt" style="top:29px">MassAction</div>
  <div class="dl" style="top:48px"></div>
  <div class="t rt" style="top:54px"><span class="green">kon</span><span class="blue">*Target*Drug - </span><span class="green">koff</span><span class="blue">*Complex</span></div>
  <div class="hl" style="top:73px"></div>
  <div class="t rnum" style="top:82px">3</div>
  <div class="ebox" style="top:78px"></div>
  <div class="t rt" style="top:79px"><span class="blue">Complex</span> -&gt; null</div>
  <div class="dl" style="top:98px"></div>
  <div class="t rt" style="top:103px">MassAction</div>
  <div class="dl" style="top:122px"></div>
  <div class="t rt" style="top:128px"><span class="green">km</span><span class="blue">*Complex</span></div>
  <div class="hl" style="top:147px"></div>
  <div class="t rnum" style="top:156px">4</div>
  <div class="ebox" style="top:152px"></div>
  <div class="t rt" style="top:153px">null -&gt; <span class="blue">Target</span></div>
  <div class="dl" style="top:172px"></div>
  <div class="t rt" style="top:177px">None</div>
  <div class="dl" style="top:196px"></div>
  <div class="t rt" style="top:202px"><span class="green">ksyn</span></div>
  <div class="hl" style="top:221px"></div>
  <div class="t rnum" style="top:230px">5</div>
  <div class="ebox" style="top:226px"></div>
  <div class="t rt" style="top:227px"><span class="blue">Target</span> -&gt; null</div>
  <div class="dl" style="top:246px"></div>
  <div class="t rt" style="top:251px">MassAction</div>
  <div class="dl" style="top:270px"></div>
  <div class="t rt" style="top:276px"><span class="green">kdeg</span><span class="blue">*Target</span></div>
 </div>

 <!-- algebraic rules -->
 <div class="t" style="left:21px;top:298.500px;font-size:10.500px;color:#6a4a1a;letter-spacing:.2px">0=</div>
 <div class="t" style="left:38px;top:298px;font-size:12px;color:#111">ALGEBRAIC RULES</div>
 <div class="ruletab" style="top:314px"><div class="rn">1</div><div class="t rp">Rule</div><div class="st"></div><div class="sq"></div></div>
 <!-- rate rules -->
 <svg style="left:19.500px;top:347px" width="15" height="14" viewBox="0 0 15 14"><g><path d="M.8 13.200L12 .8" stroke="#222" stroke-width="1"/><text x="2" y="6.200" font-family="Liberation Sans,sans-serif" font-size="8" font-weight="bold" fill="#222">d</text><text x="6.300" y="13.300" font-family="Liberation Sans,sans-serif" font-size="8" font-weight="bold" fill="#222" textLength="8" lengthAdjust="spacingAndGlyphs">dt</text></g></svg>
 <div class="t" style="left:38px;top:349px;font-size:12px;color:#111">RATE RULES</div>
 <div class="ruletab" style="top:365px"><div class="rn">1</div><div class="t rp">Rule</div><div class="st"></div><div class="sq"></div></div>
 <!-- events -->
 <svg style="left:19.500px;top:398.500px" width="15" height="14" viewBox="0 0 15 14"><path d="M1 7.500h12.500M6.800 1.500v11M3 12.500L11 1.500" stroke="#222" stroke-width="1" fill="none"/><path d="M6.800 13.500l-1.600-2.400h3.200z M6.800 .3l-1.600 2.400h3.200z" fill="#222"/><circle cx="6.300" cy="7.600" r="1.500" fill="#fff" stroke="#e02020" stroke-width="1"/></svg>
 <div class="t" style="left:38px;top:400px;font-size:12px;color:#111">EVENTS</div>
 <div id="etab" style="left:21px;top:415px;width:385px;height:100px;border:1px solid #dcdcdc;border-top:2px solid #dcdcdc;background:#fff;overflow:hidden">
  <div style="left:0;top:0;width:27px;height:100px;background:#f0f0f0;border-right:1px solid #dcdcdc"></div>
  <div style="left:367.500px;top:0;width:16px;height:100px;background:#f0f0f0;border-left:1px solid #dcdcdc"></div>
  <div style="left:370.500px;top:1px;width:10px;height:10px;background:#80dc80;border-radius:2px"></div>
  <div class="t rnum" style="top:8px">1</div>
  <div class="ebox" style="top:4px"></div>
  <div class="t rt green" style="top:5px">TO<span style="color:#555">&gt;=</span>Safety_threshold</div>
  <div class="dl" style="top:24px"></div>
  <div class="t rt green" style="top:29.500px">Rate = Rate0</div>
  <div class="hl" style="top:49px"></div>
  <div class="t rnum" style="top:58px">2</div>
  <div class="ebox" style="top:54px"></div>
  <div class="t rt green" style="top:55px">TO<span style="color:#555">&lt;</span>Efficacy_threshold</div>
  <div class="dl" style="top:74px"></div>
  <div class="t rt green" style="top:79.500px">Rate = Rate_high</div>
 </div>
</div>

<!-- Model Assessment Tools -->
<div style="left:1px;top:772px;width:438px;height:25px;background:#f9f9f9;border-top:1px solid #c0c0c0;border-bottom:1px solid #c0c0c0"></div>
<svg style="left:8px;top:778px" width="7" height="11"><path d="M.5.500v9.500L6.200 5.200z" fill="#8c8c8c"/></svg>
<div class="t" style="left:25px;top:777px;font-size:13px;color:#333">Model Assessment Tools</div>
<svg style="left:415px;top:777px" width="12" height="12" viewBox="0 0 12 12"><circle cx="6" cy="6" r="5.300" fill="#9a9a9a"/><path d="M3 4.200h6L6 8.600z" fill="#fff"/></svg>
<!-- bottom status -->
<div style="left:1px;top:797px;width:438px;height:22px;background:#e6e6e6"></div>
<svg style="left:7px;top:803px" width="11" height="10"><path d="M.5 0v10" stroke="#8c8c8c" stroke-width="1.300"/><path d="M10 0v10L3 5z" fill="#8c8c8c"/></svg>

<!-- ============ DIAGRAM PANEL ============ -->
<div class="phead" style="left:440px;width:534px"></div>
<svg style="left:442.500px;top:157.500px" width="6" height="12"><path d="M.5 .9h4M.5 3.100h4M.5 5.300h4M.5 7.500h4M.5 9.700h4" stroke="#b4b4b4" stroke-width="1"/></svg>
<div style="left:449.500px;top:152px;width:73.300px;height:23px;background:#fff;border-top:3px solid #0a3c7c;border-right:1px solid #c8c8c8;border-left:1px solid #dcdcdc"></div>
<div class="t" style="left:458px;top:158.500px;font-size:12px;color:#1f2a44">Diagram</div>
<svg style="left:510.500px;top:160.500px" width="7" height="7"><path d="M.5.500l6 6M6.500.500l-6 6" stroke="#8a8a8a" stroke-width="1.400"/></svg>
<svg style="left:947px;top:157px" width="12" height="12" viewBox="0 0 12 12"><circle cx="6" cy="6" r="5.300" fill="#9a9a9a"/><path d="M3 4.200h6L6 8.600z" fill="#fff"/></svg>
<div class="vdiv" style="left:974px"></div>

<!-- search row -->
<div class="inp" style="left:444px;top:179px;width:336px;height:22px"></div>
<svg style="left:760px;top:181px" width="20" height="19" viewBox="0 0 20 19"><use href="#magn"/></svg>
<div class="btn dis" style="left:787px;top:179px;width:22px;height:22px"></div>
<svg style="left:794px;top:185px" width="7" height="10"><path d="M6 0v10L.5 5z" fill="#c4c4c4"/></svg>
<div class="btn dis" style="left:813px;top:179px;width:22px;height:22px"></div>
<svg style="left:821px;top:185px" width="7" height="10"><path d="M.5 0v10L6 5z" fill="#c4c4c4"/></svg>
<div class="btn" style="left:839px;top:179px;width:23px;height:22px"></div>
<svg style="left:842.500px;top:182px" width="16" height="16" viewBox="-8 -8 16 16"><g transform="scale(.68)"><use href="#gear12" fill="#5c5c5c" stroke="#262626" stroke-width="1"/></g><circle r="4.500" fill="none" stroke="#b4b4b4" stroke-width="1.500"/><circle r="3" fill="#fdfdfd" stroke="#262626" stroke-width="1"/></svg>
<div class="btn" style="left:870px;top:179px;width:22px;height:22px"></div>
<svg style="left:874px;top:183px" width="15" height="15" viewBox="0 0 15 15"><circle cx="6" cy="6" r="4.800" fill="#fff" stroke="#1d3f72" stroke-width="1.300"/><path d="M3.500 6h5M6 3.500v5" stroke="#222" stroke-width="1.100"/><path d="M9.600 9.600l4 4" stroke="#8a5a1a" stroke-width="2" stroke-linecap="round"/></svg>
<div class="btn" style="left:896px;top:179px;width:22px;height:22px"></div>
<svg style="left:900px;top:183px" width="15" height="15" viewBox="0 0 15 15"><circle cx="6" cy="6" r="4.800" fill="#fff" stroke="#1d3f72" stroke-width="1.300"/><path d="M3.500 6h5" stroke="#222" stroke-width="1.100"/><path d="M9.600 9.600l4 4" stroke="#8a5a1a" stroke-width="2" stroke-linecap="round"/></svg>
<div class="btn" style="left:922px;top:179px;width:22px;height:22px"></div>
<svg style="left:924.500px;top:181.500px" width="18" height="17" viewBox="0 0 18 17"><path d="M5 9.500L3.800 3.800c-.3-1.300 1.400-1.700 1.800-.4L6.800 7.500 6.500 2c0-1.300 1.800-1.400 1.900-.1l.5 5.400L9.800 1.700c.1-1.300 1.900-1.100 1.800.2L11.200 7.600l1.600-4.400c.4-1.200 2-.6 1.700.6L13.400 9.200c-.2 1.200-.3 2.600-.5 3.800-.2 1.500-.8 2.700-2 2.700H7.200c-1 0-1.600-.6-2.200-1.500L2 9.800c-.7-1.100.7-2.100 1.500-1.100z" fill="#fff" stroke="#1d3f72" stroke-width="1" stroke-linejoin="round"/></svg>
<div class="btn" style="left:948px;top:179px;width:22px;height:22px"></div>
<svg style="left:952px;top:183px" width="14" height="14" viewBox="0 0 14 14"><rect x=".5" y=".5" width="13" height="13" fill="#fff" stroke="#4a4a4a" stroke-width="1.100"/><path d="M2.300 5V2.300H5M2.300 2.300L5.500 5.500M9 2.300h2.700V5M11.700 2.300L8.500 5.500M2.300 9v2.700H5M2.300 11.700L5.500 8.500M11.700 9v2.700H9M11.700 11.700L8.500 8.500" stroke="#333" stroke-width=".9" fill="none"/></svg>
<div style="left:440px;top:205px;width:534px;height:1px;background:#d0d0d0"></div>

<!-- palette -->
<svg style="left:449.500px;top:212.800px" width="17.500" height="17.500" viewBox="0 0 18 18"><rect x=".7" y=".7" width="16.600" height="16.600" rx="3" fill="#fff" stroke="#4a90d8" stroke-width="1.300"/><path d="M4.500 6.500C6 4 9 3.800 11 4.200M13.500 10.500c-1 3-3.500 3.400-5.500 3.200" stroke="#a8c8e8" stroke-width="1.300" fill="none"/><rect x="2.400" y="5.500" width="2.300" height="3" rx=".5" fill="#f4d060" stroke="#d8b040" stroke-width=".4"/><rect x="12.500" y="7" width="2.300" height="3.800" rx=".5" fill="#f4d060" stroke="#d8b040" stroke-width=".4"/></svg>
<svg style="left:493px;top:215.500px" width="20" height="13" viewBox="0 0 20 13"><rect x="1.200" y="1" width="17" height="10.200" rx="5.100" fill="url(#gPill)" stroke="#3a78c0" stroke-width="1.400"/></svg>
<svg style="left:537px;top:212px" width="18" height="18" viewBox="0 0 18 18"><defs><radialGradient id="gBall" cx=".4" cy=".35" r=".75"><stop offset="0" stop-color="#f4cc58"/><stop offset="1" stop-color="#d89c2c"/></radialGradient></defs><circle cx="9" cy="8.900" r="7.600" fill="url(#gBall)" stroke="#6890b8" stroke-width="1.100"/></svg>
<svg style="left:583px;top:213px" width="17" height="16" viewBox="0 0 17 16"><circle cx="7" cy="8.100" r="5.500" fill="#fce9a4" stroke="#c88a2a" stroke-width="1.400"/><path d="M4.200 6.900h5.400M4.200 9.200h5.400" stroke="#9a9080" stroke-width="1.200"/><path d="M11.300 5l3.600 1.300-2.600 2.400z" fill="#a05a14"/></svg>
<svg style="left:626.500px;top:213px" width="16" height="15" viewBox="0 0 15 14"><g><path d="M.8 13.200L12 .8" stroke="#222" stroke-width="1"/><text x="2" y="6.200" font-family="Liberation Sans,sans-serif" font-size="8" font-weight="bold" fill="#222">d</text><text x="6.300" y="13.300" font-family="Liberation Sans,sans-serif" font-size="8" font-weight="bold" fill="#222" textLength="8" lengthAdjust="spacingAndGlyphs">dt</text></g></svg>
<div class="t" style="left:671.500px;top:212.500px;font-size:18.500px;font-weight:bold;color:#1e90f0">A</div>
<div style="left:440px;top:236px;width:534px;height:1px;background:#d0d0d0"></div>

<!-- canvas -->
<svg id="canvas" style="left:440px;top:237px" width="534" height="546" viewBox="440 237 534 546" font-family="Liberation Sans,sans-serif">
 <!-- compartment -->
 <rect x="540" y="291" width="343" height="198.500" rx="9.500" fill="none" stroke="#5b6fb8" stroke-width="1.900"/>
 <text x="711.500" y="278" font-size="13.700" text-anchor="middle" fill="#111">Plasma</text>
 <g transform="translate(538.500,279.800)"><use href="#repic"/></g>
 <!-- edges -->
 <g stroke="#3c3c3c" stroke-width="1.100" fill="none">
  <path d="M492 398.500H574"/>
  <path d="M606 397.500L681 403"/>
  <path d="M699 403L794 397.500"/>
  <path d="M826 397.500H933.500"/>
  <path d="M809.500 345V382"/>
  <path d="M689.500 412V439"/>
  <path d="M691.250 463.500V519"/>
  <path d="M814.300 524L813.900 546"/>
  <path d="M706 462.600L803.500 507" stroke-dasharray="24 4.500 5.500 4.500"/>
  <path d="M811.500 406L812.300 423.700M812.500 427.700L812.800 434M813 438L814.200 489M814.400 493.500L814.700 498"/>
 </g>
 <g fill="#3c3c3c">
  <path d="M805.700 380.500h7.600L809.500 388z"/>
  <path d="M685.700 438h7.600L689.500 445.800z"/>
  <path d="M810 545h7.600L813.800 552.800z"/>
 </g>
 <!-- source/sink circles -->
 <g fill="#f3ca5e" stroke="#7c7c7c" stroke-width="1.500">
  <circle cx="483.250" cy="397.500" r="8.600"/>
  <circle cx="941.750" cy="396.750" r="8.600"/>
  <circle cx="809.500" cy="336.250" r="8.600"/>
  <circle cx="691.250" cy="528.250" r="8.600"/>
 </g>
 <!-- species -->
 <g fill="#d1d6eb" stroke="#919ed3" stroke-width="1.900">
  <rect x="574.200" y="388" width="31.600" height="16.800" rx="8.400"/>
  <rect x="794.500" y="388" width="31.300" height="16.800" rx="8.400"/>
  <rect x="674" y="446.200" width="32" height="16.400" rx="8.200"/>
 </g>
 <g stroke="#333" stroke-width="1.100" fill="none"><path d="M574 398.500H577M604.500 397.400L607 397.600M794 397.600L797 397.400M824 397.500H827"/></g>
 <g font-size="13.700" fill="#111" text-anchor="middle">
  <text x="590" y="419.200">Drug</text>
  <text x="810.200" y="419.200">Target</text>
  <text x="690.300" y="476.700">Complex</text>
  <text x="814.200" y="581.700">TO</text>
  <text x="810" y="323.700" textLength="144" lengthAdjust="spacingAndGlyphs">Target Synthesis (ksyn)</text>
  <text x="691" y="383" fill="#2f86ea" textLength="151.500" lengthAdjust="spacingAndGlyphs">Target Binding (kon/koff)</text>
 </g>
 <!-- drug dose icon -->
 <g transform="translate(573.200,376.200)"><rect x=".5" y=".5" width="7.700" height="7.700" fill="#f2f2f2" stroke="#5a5a5a" stroke-width="1"/><path d="M1.100 6.200h2.200L4.400 1.800 5.500 6.200h2.400" fill="none" stroke="#e02020" stroke-width=".9"/></g>
 <!-- selected reaction -->
 <circle cx="690.300" cy="403.300" r="8" fill="#f3ca5e" stroke="#1c7fee" stroke-width="2.800"/>
 <path d="M689.500 411.500V415M681 403.200H673M699.500 403.200H708" stroke="#3c3c3c" stroke-width="1.100" opacity=".55"/>
 <g fill="none" stroke="#1c7fee" stroke-width=".9">
  <path d="M679.800 388.700H687.200M694.800 388.700H701.300M679.800 418.100H687.200M694.800 418.100H701.300M675.800 392.300V400.100M675.800 407.700V414.300M705.100 392.300V400.100M705.100 407.700V414.300"/>
 </g>
 <g fill="#fff" fill-opacity=".55" stroke="#1c7fee" stroke-width="1.150">
  <rect x="672.600" y="385.500" width="6.600" height="6.600"/><rect x="687.700" y="385.500" width="6.600" height="6.600"/><rect x="701.800" y="385.500" width="6.600" height="6.600"/>
  <rect x="672.600" y="400.600" width="6.600" height="6.600"/><rect x="701.800" y="400.600" width="6.600" height="6.600"/>
  <rect x="672.600" y="414.800" width="6.600" height="6.600"/><rect x="687.700" y="414.800" width="6.600" height="6.600"/><rect x="701.800" y="414.800" width="6.600" height="6.600"/>
 </g>
 <path d="M683.200 386.700h4.300M687.500 386.700V384.800" stroke="#1a2a4a" stroke-width=".8" fill="none"/>
 <path d="M681.300 390.200l2.300-2v1.500h4v1h-4v1.500z" fill="#1a2a4a"/>
 <!-- rule node -->
 <rect x="803.800" y="500.900" width="22.300" height="22.300" fill="#fdf3d8" stroke="#d6ab6c" stroke-width="1.700"/>
 <defs><radialGradient id="gRule" cx=".4" cy=".4" r=".7"><stop offset="0" stop-color="#fbe47a"/><stop offset="1" stop-color="#efc42c"/></radialGradient></defs>
 <circle cx="814" cy="512.200" r="7.800" fill="url(#gRule)" stroke="#a87412" stroke-width="2"/>
 <path d="M810.300 510.600h6.800M810.300 513.600h6.800" stroke="#8a4a10" stroke-width="1.500"/>
 <path d="M819.800 509.800l4.600 1.500-3.400 3.300z" fill="#8a4a10"/>
 <!-- TO -->
 <rect x="803" y="553" width="22" height="15" rx="7.500" fill="#c4dca0" stroke="#52a04a" stroke-width="2"/>
 <g transform="translate(806.300,545.700)"><circle r="3.700" fill="#fff" stroke="#961a1a" stroke-width="1.100"/><path d="M-2.300-.9h4.600M-2.300 1.100h4.600" stroke="#961a1a" stroke-width="1"/></g>
</svg>
<!-- right strip of diagram -->
<div style="left:973px;top:237px;width:1px;height:546px;background:#e4e4e4"></div>
<!-- h scrollbar -->
<div style="left:440px;top:783px;width:534px;height:14px;background:#f8f8f8;border-top:1px solid #c4c4c4;border-bottom:1px solid #c4c4c4"></div>
<div style="left:442px;top:786px;width:314px;height:8px;border-radius:4px;background:#b4b4b4"></div>

<!-- ============ PROPERTY EDITOR ============ -->
<div class="phead" style="left:975px;width:389px"></div>
<div class="t" style="left:983px;top:157px;font-size:13px;color:#333">Property Editor</div>
<svg style="left:1340px;top:157px" width="12" height="12" viewBox="0 0 12 12"><circle cx="6" cy="6" r="5.300" fill="#9a9a9a"/><path d="M3 4.200h6L6 8.600z" fill="#fff"/></svg>

<div id="pscroll" style="left:975px;top:175px;width:372px;height:603px;overflow:hidden;background:#fff">
 <div style="left:6px;top:10px;width:8px;height:600px;background:#f0f0f0"></div>
 <div id="rbox" style="left:20px;top:10px;width:360px;height:585px;border:1px solid #b0b0b0;background:#fff">
  <div style="left:0;top:0;width:360px;height:25px;background:#efefef;border-bottom:1px solid #b0b0b0"></div>
  <div class="t" style="left:5px;top:4.200px;font-size:13px;color:#444">REACTION</div>
  <div class="ph" style="top:31px">NAME</div>
  <div class="pv" style="top:48px">Target Binding (kon/koff)</div>
  <div class="pl" style="top:69px"></div>
  <div class="ph" style="top:77px">ACTIVE</div>
  <div class="pv" style="top:94px;left:16.500px">true</div>
  <div class="pl" style="top:116px"></div>
  <div class="ph" style="top:124px">REACTION</div>
  <div class="t" style="left:19px;top:146.500px;font-size:13px"><span class="blue">Target</span> + <span class="blue">Drug</span> &lt;-&gt; <span class="blue">Complex</span></div>
  <div class="pl" style="top:170px"></div>
  <div class="ph" style="top:178px">REVERSIBLE</div>
  <div class="pv" style="top:195px;left:16.500px">true</div>
  <div class="pl" style="top:217px"></div>
  <div class="ph" style="top:225px">REACTION RATE</div>
  <div class="t" style="left:19.500px;top:248px;font-size:13px"><span class="green">kon</span><span class="blue">*Target*Drug - </span><span class="green">koff</span><span class="blue">*Complex</span></div>
  <div class="pl" style="top:271px"></div>
  <div class="ph" style="top:279px">KINETIC LAW</div>
  <div class="pv" style="top:304px;left:18px">Kinetic Law</div>
  <div class="pv" style="top:304px;left:92px">=</div>
  <div class="pv" style="top:303px;left:104.500px">MassAction</div>
  <svg style="left:16px;top:328.500px" width="17" height="10" viewBox="0 0 17 10"><use href="#gpill"/></svg>
  <div class="pv" style="top:327px;left:37.500px">Forward</div>
  <div class="pv" style="top:327px;left:92px">=</div>
  <div class="t" style="top:325px;left:108.500px;font-size:13px;color:#333">kon</div>
  <svg style="left:16px;top:350.500px" width="17" height="10" viewBox="0 0 17 10"><use href="#gpill"/></svg>
  <div class="pv" style="top:349px;left:37.500px">Reverse</div>
  <div class="pv" style="top:349px;left:92px">=</div>
  <div class="t" style="top:347px;left:108.500px;font-size:13px;color:#333">koff</div>
  <div class="pl" style="top:375px"></div>
  <div class="ph" style="top:383px">STATES</div>
  <!-- states table -->
  <div id="stab" style="left:7px;top:399px;width:360px;height:170.500px;border:1px solid #dcdcdc;border-bottom-width:2px;background:#fff;overflow:hidden">
   <div style="left:0;top:0;width:360px;height:23px;background:#f0f0f0"></div>
   <div style="left:0;top:0;width:28px;height:170px;background:#f0f0f0;border-right:1px solid #dcdcdc"></div>
   <div class="sv" style="left:154px;height:143px"></div><div class="sv" style="left:217px;height:143px"></div>
   <div class="sh" style="top:23px"></div><div class="sh" style="top:47px"></div><div class="sh" style="top:71px"></div><div class="sh" style="top:95px"></div><div class="sh" style="top:119px"></div><div class="sh" style="top:143px"></div>
   <div class="t sb" style="left:52px;top:5.500px">Name</div><div class="t sb" style="left:159px;top:5.500px">Value</div><div class="t sb" style="left:222px;top:5.500px">Units</div>
   <div class="t sn" style="top:32px">1</div>
   <svg style="left:53px;top:31px" width="17" height="10" viewBox="0 0 17 10"><use href="#bpill"/></svg>
   <div class="t sc" style="left:77.500px;top:29px">Target</div>
   <div class="t sc" style="left:159px;top:29px">10</div>
   <div class="t sc" style="left:222px;top:29px">nanomole/liter</div>
   <div class="t sn" style="top:56px">2</div>
   <svg style="left:53px;top:55px" width="17" height="10" viewBox="0 0 17 10"><use href="#bpill"/></svg>
   <div class="t sc" style="left:77.500px;top:53px">Complex</div>
   <div class="t sc" style="left:159px;top:53px">5</div>
   <div class="t sc" style="left:222px;top:53px">nanomole/liter</div>
   <div class="t sn" style="top:80px">3</div>
   <svg style="left:13.500px;top:80.5px" width="10" height="10" viewBox="0 0 10 10"><rect x=".5" y=".5" width="8.200" height="8.200" fill="#f2f2f2" stroke="#5a5a5a" stroke-width="1"/><path d="M1.300 6.600h2.200L4.600 2 5.700 6.600h2.400" fill="none" stroke="#e02020" stroke-width=".9"/></svg>
   <svg style="left:53px;top:79px" width="17" height="10" viewBox="0 0 17 10"><use href="#bpill"/></svg>
   <div class="t sc" style="left:77.500px;top:77px">Drug</div>
   <div class="t sc" style="left:159px;top:77px">2.0200</div>
   <div class="t sc" style="left:222px;top:77px">nanomole/liter</div>
   <div class="t sn" style="top:104px">4</div>
   <svg style="left:12.500px;top:105px" width="11" height="9" viewBox="0 -0.5 11 9"><use href="#repic"/></svg>
   <svg style="left:53px;top:103px" width="17" height="10" viewBox="0 0 17 10"><use href="#gpill"/></svg>
   <div class="t sc" style="left:77.500px;top:101px">kon</div>
   <div class="t sc" style="left:159px;top:101px">0.0485</div>
   <div class="t sc" style="left:222px;top:101px">liter/nanomole/hour</div>
   <div class="t sn" style="top:128px">5</div>
   <svg style="left:12.500px;top:129px" width="11" height="9" viewBox="0 -0.5 11 9"><use href="#repic"/></svg>
   <svg style="left:53px;top:127px" width="17" height="10" viewBox="0 0 17 10"><use href="#gpill"/></svg>
   <div class="t sc" style="left:77.500px;top:125px">koff</div>
   <div class="t sc" style="left:159px;top:125px">0.0138</div>
   <div class="t sc" style="left:222px;top:125px">1/hour</div>
   <div class="t sn" style="top:152px">6</div>
  </div>
 </div>
 <div style="left:20px;top:601px;width:360px;height:10px;border-top:1px solid #b0b0b0;border-left:1px solid #b0b0b0"></div>
</div>
<!-- v scrollbar -->
<div style="left:1347px;top:175px;width:16px;height:604px;background:#f1f1f1"></div>
<svg style="left:1350.500px;top:181.500px" width="10" height="6"><path d="M0 5h9.500L4.750 0z" fill="#a3a3a3"/></svg>
<svg style="left:1351.500px;top:766.500px" width="10" height="6"><path d="M0 0h7.600L3.800 4.200z" fill="#505050"/></svg>
<div style="left:1349px;top:192px;width:13px;height:279px;background:#c1c1c1"></div>
<!-- h scrollbar -->
<div style="left:975px;top:778px;width:372px;height:17.500px;background:#f1f1f1"></div>
<div style="left:1347px;top:778px;width:16px;height:17.500px;background:#dcdcdc"></div>
<svg style="left:981px;top:783px" width="6" height="10"><path d="M4.200 0v7.400L0 3.700z" fill="#a3a3a3"/></svg>
<svg style="left:1336.500px;top:783px" width="6" height="10"><path d="M0 0v7.400L4.200 3.700z" fill="#505050"/></svg>
<div style="left:992px;top:780px;width:304px;height:13px;background:#c1c1c1"></div>
<div style="left:975px;top:796px;width:389px;height:1px;background:#c4c4c4"></div>
<div style="left:975px;top:797px;width:389px;height:22px;background:#e6e6e6"></div>
<svg style="left:1347px;top:803px" width="11" height="10"><path d="M10.200 0v10" stroke="#8c8c8c" stroke-width="1.300"/><path d="M.5 0v10L7.500 5z" fill="#8c8c8c"/></svg>


</div></div>
</body>
</html>
